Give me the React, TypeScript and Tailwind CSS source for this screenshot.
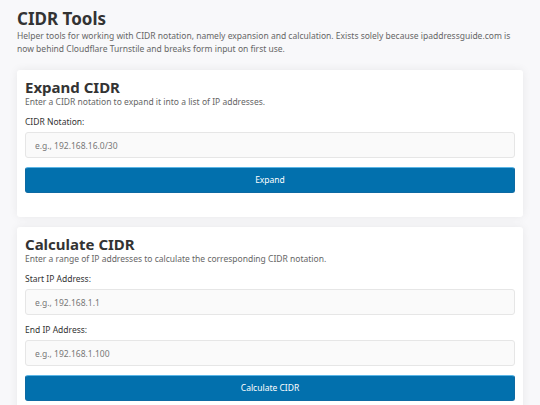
import React from 'react'

type FieldProps = {
  label: string
  placeholder: string
}

const Field: React.FC<FieldProps> = ({ label, placeholder }) => (
  <div className="flex flex-col">
    <label className="text-[8.5px] leading-[12px] text-[#333]">{label}</label>
    <input
      placeholder={placeholder}
      className="mt-[4px] h-[26px] w-full rounded-[3px] border border-[#e6e6e6] bg-[#fafafa] px-[9px] text-[8.5px] text-[#333] placeholder:text-[#777] focus:outline-none"
    />
  </div>
)

const Card: React.FC<{
  title: string
  description: string
  children: React.ReactNode
}> = ({ title, description, children }) => (
  <section className="rounded-[3px] bg-white px-[8px] pt-[8px] pb-[24px] shadow-[0_0_10px_rgba(0,0,0,0.07)]">
    <h2 className="text-[15px] font-bold leading-[18px] text-[#333]">{title}</h2>
    <p className="text-[8.5px] leading-[11px] text-[#666]">{description}</p>
    <div className="mt-[9px] flex flex-col gap-[9px]">{children}</div>
  </section>
)

const Button: React.FC<{ children: React.ReactNode }> = ({ children }) => (
  <button className="h-[26px] w-full rounded-[3px] border border-[#0d6aa3] border-t-[#5cb6e6] bg-[#0270ad] text-[8.5px] text-white">
    {children}
  </button>
)

export default function App() {
  return (
    <div className="min-h-[405px] bg-[#f8f8fa] px-[17px] pt-[8px] font-['Noto_Sans',sans-serif]">
      <h1 className="text-[17px] font-bold leading-[22px] text-[#333]">CIDR Tools</h1>
      <p className="text-[8.5px] leading-[12.5px] text-[#666]">
        Helper tools for working with CIDR notation, namely expansion and calculation. Exists solely because ipaddressguide.com is now behind Cloudflare Turnstile and breaks form input on first use.
      </p>

      <div className="mt-[15px] flex flex-col gap-[10px]">
        <Card
          title="Expand CIDR"
          description="Enter a CIDR notation to expand it into a list of IP addresses."
        >
          <Field label="CIDR Notation:" placeholder="e.g., 192.168.16.0/30" />
          <Button>Expand</Button>
        </Card>

        <Card
          title="Calculate CIDR"
          description="Enter a range of IP addresses to calculate the corresponding CIDR notation."
        >
          <Field label="Start IP Address:" placeholder="e.g., 192.168.1.1" />
          <Field label="End IP Address:" placeholder="e.g., 192.168.1.100" />
          <Button>Calculate CIDR</Button>
        </Card>
      </div>
    </div>
  )
}
